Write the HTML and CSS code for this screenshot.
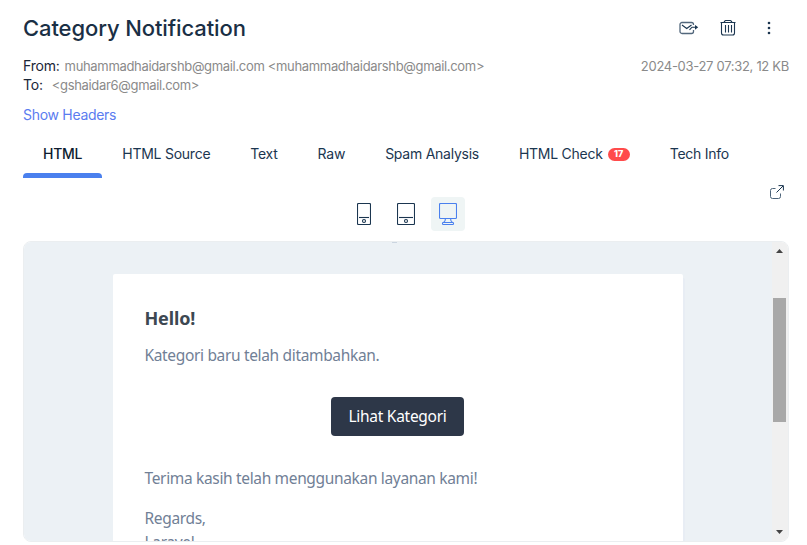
FILE: index.html
```html
<!DOCTYPE html>
<html lang="en">
<head>
<meta charset="utf-8">
<title>Category Notification</title>
<link rel="stylesheet" href="styles.css">
</head>
<body>
<main class="message">
  <header class="top">
    <h1 class="title">Category Notification</h1>
    <div class="actions">
      <svg class="icon-forward" width="20" height="14" viewBox="0 0 20 14" fill="none" stroke="#1b3650" stroke-width="1.1"><path d="M14.500 9v1.500a2 2 0 0 1-2 2H3a2 2 0 0 1-2-2v-7a2 2 0 0 1 2-2h9.500a2 2 0 0 1 2 2v.5" stroke="#52677c" stroke-width="1.300"/><path d="M3 4l4.700 3.500L12.500 4M10.500 8.800l2.500-2.600 5 .1"/><path d="M16 3.900L19.200 6.300 16 8.700z" fill="#1b3650" stroke="none"/></svg>
      <svg class="icon-trash" width="16" height="16" viewBox="0 0 16 16" fill="none" stroke="#1b3650" stroke-width="1.1"><path d="M.5 2.500h15M4 2.500Q4.500.5 6 .5h4q1.500 0 2 2M1.500 2.500v10.500q0 2 2 2h9q2 0 2-2V2.500M5.500 5v7.500M8.500 5v7.500M11.500 5v7.500"/></svg>
      <svg class="icon-more" width="4" height="14" viewBox="0 0 4 14" fill="#1b3650"><circle cx="2" cy="2" r="1.300"/><circle cx="2" cy="7" r="1.300"/><circle cx="2" cy="12" r="1.300"/></svg>
    </div>
  </header>
  <section class="meta">
    <div class="people">
      <div class="row"><span class="label">From:</span><span class="address sender">muhammadhaidarshb@gmail.com &lt;muhammadhaidarshb@gmail.com&gt;</span></div>
      <div class="row"><span class="label">To:</span><span class="address recipient">&lt;gshaidar6@gmail.com&gt;</span></div>
    </div>
    <div class="date">2024-03-27 07:32, 12 KB</div>
  </section>
  <a class="show-headers">Show Headers</a>
  <nav class="tabs">
    <a class="tab active">HTML</a>
    <a class="tab">HTML Source</a>
    <a class="tab">Text</a>
    <a class="tab">Raw</a>
    <a class="tab">Spam Analysis</a>
    <a class="tab">HTML Check<span class="badge">17</span></a>
    <a class="tab">Tech Info</a>
  </nav>
  <div class="toolbar">
    <span class="side"></span>
    <div class="devices">
      <span class="device"><svg width="14" height="22" viewBox="0 0 14 22" fill="none" stroke="#1b3650" stroke-width="1.100"><rect x=".5" y=".5" width="13" height="21" rx="1"/><path d="M2 14.500h10"/><circle cx="7" cy="18" r="1.500"/></svg></span>
      <span class="device"><svg width="18" height="22" viewBox="0 0 18 22" fill="none" stroke="#1b3650" stroke-width="1.100"><rect x=".5" y=".5" width="17" height="21" rx="1"/><path d="M2 14.500h14"/><circle cx="9" cy="18" r="1.500"/></svg></span>
      <span class="device selected"><svg width="18" height="22" viewBox="0 0 18 22" fill="none" stroke="#4a80ee" stroke-width="1.100"><rect x=".5" y=".5" width="17" height="15" rx="1"/><path d="M6.500 15.500Q6.500 18 4.500 19.500M11.500 15.500Q11.500 18 13.500 19.500"/><rect x="3.500" y="19.500" width="11" height="2" rx=".8"/></svg></span>
    </div>
    <span class="side end"><svg width="14" height="14" viewBox="0 0 14 14" fill="none" stroke="#1b3650"><path d="M5.500 3.500h-3q-2 0-2 2v6q0 2 2 2h6q2 0 2-2V8.500" stroke="#4c6379"/><path d="M6.500 7.500L13 1M8.500.6h4.900v4.900"/></svg></span>
  </div>
  <div class="preview">
    <div class="canvas">
      <span class="remnant"></span>
      <article class="mail">
        <h2 class="hello">Hello!</h2>
        <p class="line intro">Kategori baru telah ditambahkan.</p>
        <a class="button"><span>Lihat Kategori</span></a>
        <p class="line thanks">Terima kasih telah menggunakan layanan kami!</p>
        <p class="line regards">Regards,<br>Laravel</p>
      </article>
    </div>
    <div class="scrollbar">
      <svg width="7" height="4" viewBox="0 0 7 4" fill="#444"><path d="M0 4L3.500 0 7 4z"/></svg>
      <span class="thumb"></span>
      <svg class="down" width="7" height="4" viewBox="0 0 7 4" fill="#444"><path d="M0 0h7L3.500 4z"/></svg>
    </div>
  </div>
</main>
</body>
</html>
```
FILE: styles.css
```css
* { box-sizing: border-box; }
body { margin: 0; background: #fff; font: 14px/19px Inter, "Liberation Sans", sans-serif; color: #1b3650; overflow: hidden; }
h1, h2, p { margin: 0; }
svg { display: block; flex: none; }
.message { width: 807px; height: 545px; padding: 12px 18px 3px 23px; display: flex; flex-direction: column; }
.top { display: flex; justify-content: space-between; height: 45px; }
.title { font-size: 22px; line-height: 32px; font-weight: 500; letter-spacing: -0.1px; white-space: nowrap; color: #1a2f45; }
.actions { display: flex; align-items: center; height: 32px; padding-right: 18px; }
.icon-trash { margin-left: 21px; }
.icon-more { margin-left: 31px; }
.meta { display: flex; justify-content: space-between; height: 48px; color: #8a8a8a; }
.row { display: flex; white-space: nowrap; }
.label { color: #1a2638; letter-spacing: -0.2px; line-height: 18px; }
.sender { margin-left: 5px; }
.recipient { margin-left: 9px; }
.address, .date { font-size: 13px; letter-spacing: -0.33px; white-space: nowrap; }
.date { letter-spacing: -0.3px; }
.show-headers { color: #5b7cf0; height: 28px; align-self: flex-start; letter-spacing: -0.3px; }
.tabs { display: flex; height: 45px; letter-spacing: -0.25px; }
.tab { padding: 11px 20px 0; white-space: nowrap; display: flex; }
.active { color: #0d1c30; font-weight: 500; position: relative; }
.active::after { content: ""; position: absolute; left: 0; right: 0; bottom: 0; height: 5px; background: #4a80ee; border-radius: 4px 4px 0 0; }
.badge { margin: 4px 0 0 5px; height: 13px; width: 22px; border-radius: 7px; background: #ff4b4b; color: #fff; font-size: 9px; line-height: 12px; font-weight: 800; text-align: center; letter-spacing: 0; }
.toolbar { display: flex; height: 63px; }
.side { flex: 1; }
.end { display: flex; justify-content: flex-end; padding: 7px 5px 0 0; }
.devices { display: flex; gap: 8px; padding-top: 19px; margin-left: 5px; }
.device { width: 34px; height: 34px; display: flex; align-items: center; justify-content: center; border-radius: 4px; }
.selected { background: #eff5f5; }
.preview { height: 301px; display: flex; border: 1px solid #ebeef0; border-radius: 8px; overflow: hidden; }
.canvas { flex: 1; background: #ecf1f5; display: flex; flex-direction: column; align-items: center; overflow: hidden; }
.remnant { width: 5px; height: 1px; background: #cbd5e0; margin-right: 8px; flex: none; }
.mail { width: 570px; height: 400px; flex: none; margin: 31px 1px 0 0; background: #fff; border-radius: 2px; padding: 32px; box-shadow: 0 2px 0 #e5ebf2, 2px 4px 0 #e8edf4; display: flex; flex-direction: column; font-family: "Noto Sans", "Open Sans", sans-serif; color: #718096; }
.hello { font-size: 18px; line-height: 24px; color: #3d4852; align-self: flex-start; letter-spacing: -0.15px; }
.line { font-size: 15.5px; line-height: 24px; white-space: nowrap; align-self: flex-start; letter-spacing: -0.34px; }
.intro { margin-top: 13px; }
.button { margin-top: 30px; align-self: center; width: 133px; height: 39px; background: #2d3748; color: #fff; border-radius: 4px; font-size: 15.5px; line-height: 38px; letter-spacing: -0.27px; text-align: center; white-space: nowrap; }
.thanks { margin-top: 30px; }
.regards { margin-top: 16px; }
.scrollbar { width: 16px; background: #f0f0f0; display: flex; flex-direction: column; align-items: flex-start; padding: 7px 0 7px 1px; }
.scrollbar svg { margin-left: 3px; }
.thumb { width: 13px; height: 124px; background: #a8a8a8; margin-top: 45px; }
.down { margin-top: auto; }
```
